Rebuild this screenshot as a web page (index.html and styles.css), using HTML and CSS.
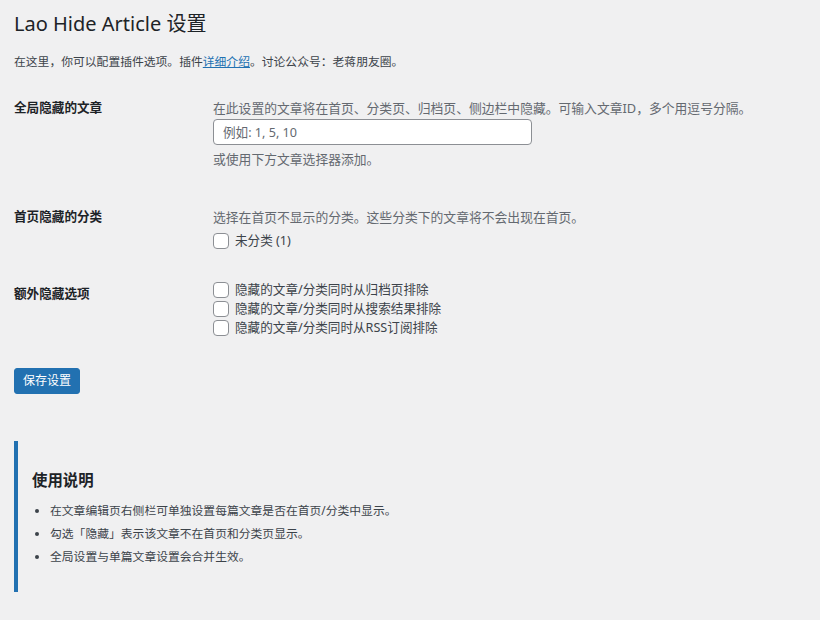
FILE: index.html
```html
<!DOCTYPE html>
<html lang="zh-CN">
<head>
    <meta charset="UTF-8">
    <meta name="viewport" content="width=device-width, initial-scale=1.0">
    <title>Lao Hide Article 设置</title>
    <link rel="stylesheet" href="styles.css">
</head>
<body>
<div class="wrap">
    <h1>Lao Hide Article 设置</h1>
    <p class="intro">在这里，你可以配置插件选项。插件<a href="#">详细介绍</a>。讨论公众号：老蒋朋友圈。</p>

    <form>
        <table class="form-table">
            <tr>
                <th>全局隐藏的文章</th>
                <td>
                    <p class="description">在此设置的文章将在首页、分类页、归档页、侧边栏中隐藏。可输入文章ID，多个用逗号分隔。</p>
                    <input type="text" class="ids-input" placeholder="例如: 1, 5, 10">
                    <p class="description note">或使用下方文章选择器添加。</p>
                </td>
            </tr>
            <tr>
                <th>首页隐藏的分类</th>
                <td class="cats">
                    <p class="description">选择在首页不显示的分类。这些分类下的文章将不会出现在首页。</p>
                    <label class="check first"><input type="checkbox"> 未分类 (1)</label>
                </td>
            </tr>
            <tr>
                <th>额外隐藏选项</th>
                <td class="extra">
                    <label class="check"><input type="checkbox"> 隐藏的文章/分类同时从归档页排除</label>
                    <label class="check"><input type="checkbox"> 隐藏的文章/分类同时从搜索结果排除</label>
                    <label class="check"><input type="checkbox"> 隐藏的文章/分类同时从RSS订阅排除</label>
                </td>
            </tr>
        </table>

        <p class="submit"><button type="button" class="button-primary">保存设置</button></p>
    </form>

    <div class="help-box">
        <h2>使用说明</h2>
        <ul>
            <li>在文章编辑页右侧栏可单独设置每篇文章是否在首页/分类中显示。</li>
            <li>勾选「隐藏」表示该文章不在首页和分类页显示。</li>
            <li>全局设置与单篇文章设置会合并生效。</li>
        </ul>
    </div>
</div>
</body>
</html>
```

FILE: styles.css
```css
:root {
    --wp-blue: #2271b1;
    --text-color: #1d2327;
    --body-text: #3c434a;
    --light-text: #646970;
    --border-color: #8c8f94;
    --bg: #f0f0f1;
}

* {
    margin: 0;
    padding: 0;
    box-sizing: border-box;
}

body {
    font-family: "Noto Sans", "Noto Sans CJK SC", sans-serif;
    background-color: var(--bg);
    color: var(--body-text);
    font-size: 12.6px;
    line-height: 20px;
}

.wrap {
    padding: 0 14px;
}

h1 {
    font-size: 20px;
    font-weight: 400;
    color: var(--text-color);
    line-height: 30px;
    padding: 9px 0 4px;
}

.intro {
    font-size: 11.8px;
    margin-top: 8px;
}

.intro a {
    color: var(--wp-blue);
}

.form-table {
    border-collapse: collapse;
    margin-top: 8px;
}

.form-table th {
    width: 199px;
    text-align: left;
    vertical-align: top;
    font-size: 12.6px;
    font-weight: 700;
    color: var(--text-color);
    line-height: 18px;
    padding: 20px 10px 20px 0;
}

.form-table td {
    vertical-align: top;
    padding: 19px 10px 19px 0;
}

.description {
    color: var(--light-text);
    font-size: 12.8px;
}

.ids-input {
    display: block;
    width: 319px;
    height: 26px;
    margin-top: 1px;
    padding: 0 9px;
    font: inherit;
    color: var(--text-color);
    background: #fff;
    border: 1px solid var(--border-color);
    border-radius: 4px;
}

.ids-input::placeholder {
    color: var(--light-text);
}

.note {
    margin-top: 4px;
}

.check {
    display: flex;
    align-items: center;
    gap: 6px;
    line-height: 19px;
    color: var(--body-text);
}

.check.first {
    margin-top: 4px;
    line-height: 20px;
}

.cats {
    padding-bottom: 14px !important;
}

.extra {
    padding-top: 15px !important;
}

.check input {
    appearance: none;
    width: 16px;
    height: 16px;
    background: #fff;
    border: 1px solid var(--border-color);
    border-radius: 4px;
}

.submit {
    margin-top: 12px;
}

.button-primary {
    width: 66px;
    height: 26px;
    padding: 0;
    font: inherit;
    font-size: 12px;
    line-height: 24px;
    color: #fff;
    background: var(--wp-blue);
    border: 1px solid var(--wp-blue);
    border-radius: 3px;
    cursor: pointer;
}

.help-box {
    margin-top: 47px;
    border-left: 4px solid var(--wp-blue);
    padding: 30px 14px 26px;
}

.help-box h2 {
    font-size: 15.4px;
    font-weight: 700;
    color: var(--text-color);
    line-height: 20px;
}

.help-box ul {
    margin-top: 10px;
    padding-left: 18px;
    font-size: 11.8px;
}

.help-box li {
    line-height: 19px;
    margin-bottom: 4px;
}

.help-box li:last-child {
    margin-bottom: 0;
}
```
